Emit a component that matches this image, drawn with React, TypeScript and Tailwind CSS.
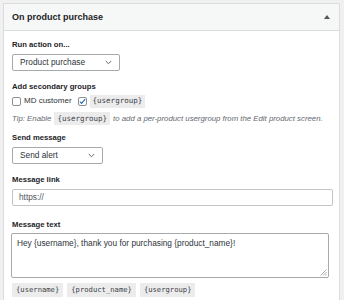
import React from 'react';

const font = { fontFamily: '"Liberation Sans", Arial, sans-serif' };

// Small chevron used in the select boxes
const Chevron = () => (
  <svg width="7" height="5" viewBox="0 0 7 5" className="shrink-0">
    <path d="M0.8 1 L3.5 3.7 L6.2 1" fill="none" stroke="#50575e" strokeWidth="0.9" />
  </svg>
);

const Code = ({ children }: { children: React.ReactNode }) => (
  <span className="inline-flex items-center h-[13px] px-[3px] bg-[#ececec] text-[#3c434a] font-['DejaVu_Sans_Mono',monospace] text-[7.5px] not-italic leading-none">
    {children}
  </span>
);

const Tag = ({ children }: { children: React.ReactNode }) => (
  <span className="inline-flex items-center h-[14px] px-[4px] bg-[#ececec] text-[#3c434a] font-['DejaVu_Sans_Mono',monospace] text-[7.2px]">
    {children}
  </span>
);

const Label = ({ children, className = '' }: { children: React.ReactNode; className?: string }) => (
  <div className={`text-[7.7px] font-bold leading-[10px] text-[#1d2327] ${className}`}>{children}</div>
);

const Select = ({ value, width }: { value: string; width: string }) => (
  <div className={`flex items-center justify-between h-[17px] ${width} pl-[7px] pr-[7px] border border-[#a7aaad] rounded-[2px] bg-white text-[8.3px] text-[#2c3338]`}>
    <span>{value}</span>
    <Chevron />
  </div>
);

export default function App() {
  return (
    <div style={font} className="w-[344px] h-[300px] overflow-hidden bg-[#f0f0f1] pt-[3px] pl-[3px] pr-[4px]">
      <div className="bg-white border border-[#dcdcde] h-[320px]">
        {/* Header */}
        <div className="flex items-center justify-between h-[27px] pl-[8px] pr-[9px] bg-[#f6f7f7] border-b border-[#dcdcde]">
          <span className="text-[9px] font-semibold text-[#1d2327] mt-[1px]">On product purchase</span>
          <svg width="6" height="4" viewBox="0 0 6 4">
            <path d="M0 4 L3 0 L6 4 Z" fill="#50575e" />
          </svg>
        </div>

        {/* Body */}
        <div className="flex flex-col px-[8px]">
          <Label className="mt-[9px]">Run action on...</Label>
          <div className="mt-[4px]">
            <Select value="Product purchase" width="w-[108px]" />
          </div>

          <Label className="mt-[11px]">Add secondary groups</Label>
          <div className="mt-[3px] flex items-center h-[12px] text-[8px] text-[#2c3338]">
            <span className="w-[9px] h-[9px] border border-[#8c8f94] rounded-[2px] bg-white" />
            <span className="ml-[3px]">MD customer</span>
            <span className="ml-[6px] w-[9px] h-[9px] border border-[#8c8f94] rounded-[2px] bg-white flex items-center justify-center">
              <svg width="8" height="7" viewBox="0 0 8 7">
                <path d="M1 3.6 L3 5.6 L7 0.8" fill="none" stroke="#2271b1" strokeWidth="1.3" />
              </svg>
            </span>
            <span className="ml-[3px]">
              <Code>{'{usergroup}'}</Code>
            </span>
          </div>

          <div className="mt-[5px] flex items-center h-[13px] text-[7.8px] italic text-[#646970] whitespace-nowrap">
            <span>Tip: Enable</span>
            <span className="ml-[3px]">
              <Code>{'{usergroup}'}</Code>
            </span>
            <span className="ml-[3px]">to add a per-product usergroup from the Edit product screen.</span>
          </div>

          <Label className="mt-[8px]">Send message</Label>
          <div className="mt-[4px]">
            <Select value="Send alert" width="w-[91px]" />
          </div>

          <Label className="mt-[11px]">Message link</Label>
          <div className="mt-[4px] flex items-center h-[17px] w-[321px] pl-[6px] border border-[#c3c4c7] rounded-[2px] text-[8.3px] text-[#50575e]">
            https://
          </div>

          <Label className="mt-[14px]">Message text</Label>
          <div className="relative mt-[3px] h-[45px] w-[318px] -ml-[1px] px-[5px] pt-[3px] border border-[#a7aaad] rounded-[2px] text-[8.3px] text-[#2c3338] leading-[12px]">
            Hey {'{username}'}, thank you for purchasing {'{product_name}'}!
            <svg width="7" height="7" viewBox="0 0 7 7" className="absolute right-[1px] bottom-[1px]">
              <path d="M6.5 0.5 L0.5 6.5 M6.5 3 L3 6.5 M6.5 5.2 L5.2 6.5" stroke="#8c8f94" strokeWidth="0.7" />
            </svg>
          </div>

          <div className="mt-[5px] flex items-center gap-[4px]">
            <Tag>{'{username}'}</Tag>
            <Tag>{'{product_name}'}</Tag>
            <Tag>{'{usergroup}'}</Tag>
          </div>
        </div>
      </div>
    </div>
  );
}
